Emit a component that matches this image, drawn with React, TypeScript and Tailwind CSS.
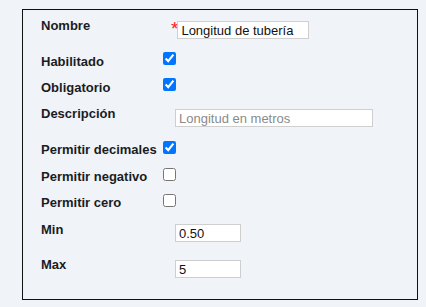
import React from "react";

const font = { fontFamily: '"Liberation Sans", Arial, sans-serif' };

function Label({ children }: { children: React.ReactNode }) {
  return (
    <div className="w-[122px] shrink-0 pt-[1px] text-[13px] font-bold leading-[15px] text-[#1a1c24]">
      {children}
    </div>
  );
}

function Check({ checked, mt = "mt-0" }: { checked?: boolean; mt?: string }) {
  return (
    <input
      type="checkbox"
      defaultChecked={checked}
      className={`m-0 h-[13px] w-[13px] ${mt}`}
    />
  );
}

export default function App() {
  return (
    <div className="min-h-[307px] w-[426px] bg-[#f0f4f8] pl-[22px] pt-[9px]" style={font}>
      <div className="h-[291px] w-[396px] border border-[#111] pl-[18px] pt-[7px]">
        {/* Nombre */}
        <div className="flex h-[36px] items-start">
          <Label>Nombre</Label>
          <span className="ml-[8px] mt-[2px] text-[19px] leading-[19px] text-[#ff1a1a]">*</span>
          <input
            type="text"
            defaultValue="Longitud de tubería"
            className="ml-[-1px] mt-[4px] h-[18px] w-[132px] border border-[#cfcfcf] bg-white px-[3px] text-[13px] leading-[16px] text-[#111] outline-none"
          />
        </div>
        {/* Habilitado */}
        <div className="flex h-[26px] items-start">
          <Label>Habilitado</Label>
          <Check checked mt="mt-[-1px]" />
        </div>
        <div className="flex h-[26px] items-start">
          <Label>Obligatorio</Label>
          <Check checked mt="mt-[-1px]" />
        </div>
        <div className="flex h-[36px] items-start">
          <Label>Descripción</Label>
          <input
            type="text"
            placeholder="Longitud en metros"
            className="ml-[12px] mt-[4px] h-[18px] w-[198px] border border-[#cfcfcf] bg-white px-[3px] text-[13px] leading-[16px] text-[#111] placeholder:text-[#8a8a8a] outline-none"
          />
        </div>
        <div className="flex h-[27px] items-start">
          <Label>Permitir decimales</Label>
          <Check checked />
        </div>
        <div className="flex h-[26px] items-start">
          <Label>Permitir negativo</Label>
          <Check />
        </div>
        <div className="flex h-[27px] items-start">
          <Label>Permitir cero</Label>
          <Check />
        </div>
        <div className="flex h-[35px] items-start">
          <Label>Min</Label>
          <input
            type="text"
            defaultValue="0.50"
            className="ml-[12px] mt-[3px] h-[18px] w-[66px] border border-[#cfcfcf] bg-white px-[3px] text-[13px] leading-[16px] text-[#111] outline-none"
          />
        </div>
        <div className="flex h-[30px] items-start">
          <Label>Max</Label>
          <input
            type="text"
            defaultValue="5"
            className="ml-[12px] mt-[4px] h-[18px] w-[66px] border border-[#cfcfcf] bg-white px-[3px] text-[13px] leading-[16px] text-[#111] outline-none"
          />
        </div>
      </div>
    </div>
  );
}
